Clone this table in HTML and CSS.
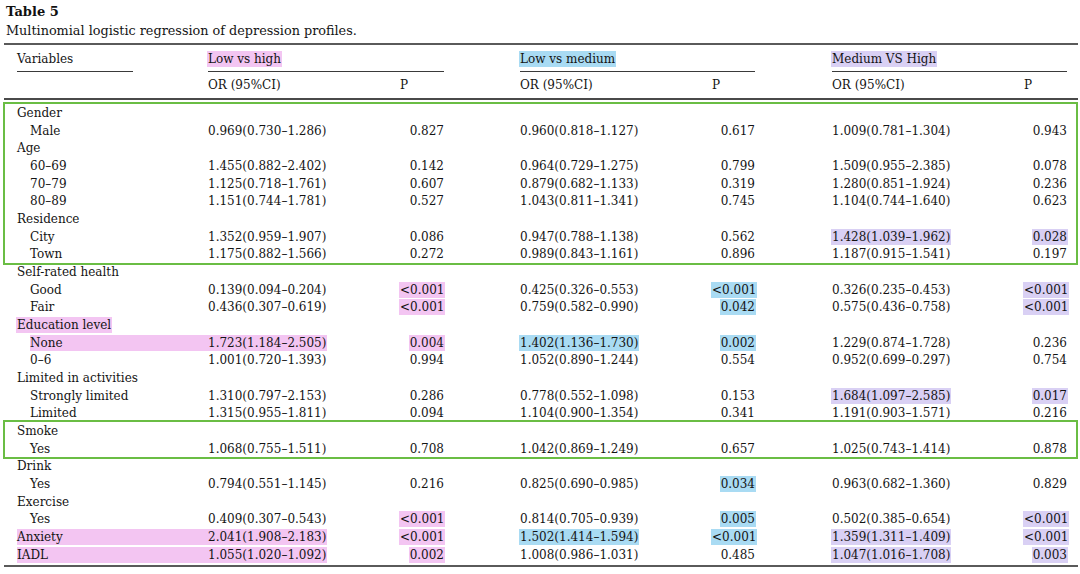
FILE: index.html
```html
<!DOCTYPE html>
<html>
<head>
<meta charset="utf-8">
<link rel="stylesheet" href="styles.css">
</head>
<body>
<div class="page">
  <h1 class="title">Table 5</h1>
  <p class="caption">Multinomial logistic regression of depression profiles.</p>
  <div class="table">
    <div class="head">
      <div class="row head1">
        <div class="hcell varcell"><span class="varline">Variables</span></div>
        <div class="hcell grp g1"><span class="hl pink">Low vs high</span></div>
        <div class="hcell grp g2"><span class="hl blue">Low vs medium</span></div>
        <div class="hcell grp g3"><span class="hl purple">Medium VS High</span></div>
      </div>
      <div class="row head2">
        <div class="cell"></div>
        <div class="cell or">OR (95%CI)</div>
        <div class="cell ph">P</div>
        <div class="cell or c2">OR (95%CI)</div>
        <div class="cell ph">P</div>
        <div class="cell or c3">OR (95%CI)</div>
        <div class="cell ph">P</div>
      </div>
    </div>
    <div class="body">
      <div class="boxed">
        <div class="row"><div class="cell lab">Gender</div></div>
        <div class="row">
          <div class="cell lab sub">Male</div>
          <div class="cell or">0.969(0.730–1.286)</div><div class="cell p">0.827</div>
          <div class="cell or c2">0.960(0.818–1.127)</div><div class="cell p">0.617</div>
          <div class="cell or c3">1.009(0.781–1.304)</div><div class="cell p">0.943</div>
        </div>
        <div class="row"><div class="cell lab">Age</div></div>
        <div class="row">
          <div class="cell lab sub">60–69</div>
          <div class="cell or">1.455(0.882–2.402)</div><div class="cell p">0.142</div>
          <div class="cell or c2">0.964(0.729–1.275)</div><div class="cell p">0.799</div>
          <div class="cell or c3">1.509(0.955–2.385)</div><div class="cell p">0.078</div>
        </div>
        <div class="row">
          <div class="cell lab sub">70–79</div>
          <div class="cell or">1.125(0.718–1.761)</div><div class="cell p">0.607</div>
          <div class="cell or c2">0.879(0.682–1.133)</div><div class="cell p">0.319</div>
          <div class="cell or c3">1.280(0.851–1.924)</div><div class="cell p">0.236</div>
        </div>
        <div class="row">
          <div class="cell lab sub">80–89</div>
          <div class="cell or">1.151(0.744–1.781)</div><div class="cell p">0.527</div>
          <div class="cell or c2">1.043(0.811–1.341)</div><div class="cell p">0.745</div>
          <div class="cell or c3">1.104(0.744–1.640)</div><div class="cell p">0.623</div>
        </div>
        <div class="row"><div class="cell lab">Residence</div></div>
        <div class="row">
          <div class="cell lab sub">City</div>
          <div class="cell or">1.352(0.959–1.907)</div><div class="cell p">0.086</div>
          <div class="cell or c2">0.947(0.788–1.138)</div><div class="cell p">0.562</div>
          <div class="cell or c3"><span class="hl purple">1.428(1.039–1.962)</span></div><div class="cell p"><span class="hl purple">0.028</span></div>
        </div>
        <div class="row">
          <div class="cell lab sub">Town</div>
          <div class="cell or">1.175(0.882–1.566)</div><div class="cell p">0.272</div>
          <div class="cell or c2">0.989(0.843–1.161)</div><div class="cell p">0.896</div>
          <div class="cell or c3">1.187(0.915–1.541)</div><div class="cell p">0.197</div>
        </div>
      </div>
      <div class="row"><div class="cell lab">Self-rated health</div></div>
      <div class="row">
        <div class="cell lab sub">Good</div>
        <div class="cell or">0.139(0.094–0.204)</div><div class="cell p"><span class="hl pink">&lt;0.001</span></div>
        <div class="cell or c2">0.425(0.326–0.553)</div><div class="cell p"><span class="hl blue">&lt;0.001</span></div>
        <div class="cell or c3">0.326(0.235–0.453)</div><div class="cell p"><span class="hl purple">&lt;0.001</span></div>
      </div>
      <div class="row">
        <div class="cell lab sub">Fair</div>
        <div class="cell or">0.436(0.307–0.619)</div><div class="cell p"><span class="hl pink">&lt;0.001</span></div>
        <div class="cell or c2">0.759(0.582–0.990)</div><div class="cell p"><span class="hl blue">0.042</span></div>
        <div class="cell or c3">0.575(0.436–0.758)</div><div class="cell p"><span class="hl purple">&lt;0.001</span></div>
      </div>
      <div class="row"><div class="cell lab"><span class="hl pink">Education level</span></div></div>
      <div class="row">
        <div class="cell lab sub band">None</div>
        <div class="cell or"><span class="hl pink joined">1.723(1.184–2.505)</span></div><div class="cell p"><span class="hl pink">0.004</span></div>
        <div class="cell or c2"><span class="hl blue">1.402(1.136–1.730)</span></div><div class="cell p"><span class="hl blue">0.002</span></div>
        <div class="cell or c3">1.229(0.874–1.728)</div><div class="cell p">0.236</div>
      </div>
      <div class="row">
        <div class="cell lab sub">0–6</div>
        <div class="cell or">1.001(0.720–1.393)</div><div class="cell p">0.994</div>
        <div class="cell or c2">1.052(0.890–1.244)</div><div class="cell p">0.554</div>
        <div class="cell or c3">0.952(0.699–0.297)</div><div class="cell p">0.754</div>
      </div>
      <div class="row"><div class="cell lab">Limited in activities</div></div>
      <div class="row">
        <div class="cell lab sub">Strongly limited</div>
        <div class="cell or">1.310(0.797–2.153)</div><div class="cell p">0.286</div>
        <div class="cell or c2">0.778(0.552–1.098)</div><div class="cell p">0.153</div>
        <div class="cell or c3"><span class="hl purple">1.684(1.097–2.585)</span></div><div class="cell p"><span class="hl purple">0.017</span></div>
      </div>
      <div class="row">
        <div class="cell lab sub">Limited</div>
        <div class="cell or">1.315(0.955–1.811)</div><div class="cell p">0.094</div>
        <div class="cell or c2">1.104(0.900–1.354)</div><div class="cell p">0.341</div>
        <div class="cell or c3">1.191(0.903–1.571)</div><div class="cell p">0.216</div>
      </div>
      <div class="boxed">
        <div class="row"><div class="cell lab">Smoke</div></div>
        <div class="row">
          <div class="cell lab sub">Yes</div>
          <div class="cell or">1.068(0.755–1.511)</div><div class="cell p">0.708</div>
          <div class="cell or c2">1.042(0.869–1.249)</div><div class="cell p">0.657</div>
          <div class="cell or c3">1.025(0.743–1.414)</div><div class="cell p">0.878</div>
        </div>
      </div>
      <div class="row"><div class="cell lab">Drink</div></div>
      <div class="row">
        <div class="cell lab sub">Yes</div>
        <div class="cell or">0.794(0.551–1.145)</div><div class="cell p">0.216</div>
        <div class="cell or c2">0.825(0.690–0.985)</div><div class="cell p"><span class="hl blue">0.034</span></div>
        <div class="cell or c3">0.963(0.682–1.360)</div><div class="cell p">0.829</div>
      </div>
      <div class="row"><div class="cell lab">Exercise</div></div>
      <div class="row">
        <div class="cell lab sub">Yes</div>
        <div class="cell or">0.409(0.307–0.543)</div><div class="cell p"><span class="hl pink">&lt;0.001</span></div>
        <div class="cell or c2">0.814(0.705–0.939)</div><div class="cell p"><span class="hl blue">0.005</span></div>
        <div class="cell or c3">0.502(0.385–0.654)</div><div class="cell p"><span class="hl purple">&lt;0.001</span></div>
      </div>
      <div class="row">
        <div class="cell lab band">Anxiety</div>
        <div class="cell or"><span class="hl pink joined">2.041(1.908–2.183)</span></div><div class="cell p"><span class="hl pink">&lt;0.001</span></div>
        <div class="cell or c2"><span class="hl blue">1.502(1.414–1.594)</span></div><div class="cell p"><span class="hl blue">&lt;0.001</span></div>
        <div class="cell or c3"><span class="hl purple">1.359(1.311–1.409)</span></div><div class="cell p"><span class="hl purple">&lt;0.001</span></div>
      </div>
      <div class="row">
        <div class="cell lab band">IADL</div>
        <div class="cell or"><span class="hl pink joined">1.055(1.020–1.092)</span></div><div class="cell p"><span class="hl pink">0.002</span></div>
        <div class="cell or c2">1.008(0.986–1.031)</div><div class="cell p">0.485</div>
        <div class="cell or c3"><span class="hl purple">1.047(1.016–1.708)</span></div><div class="cell p"><span class="hl purple">0.003</span></div>
      </div>
    </div>
  </div>
</div>
</body>
</html>
```

FILE: styles.css
```css
html, body {
  margin: 0;
  padding: 0;
  background: #ffffff;
}

body {
  font-family: "DejaVu Serif", "Liberation Serif", serif;
  color: #141414;
}

.page {
  padding: 3px 0 0 4px;
}

.title {
  margin: 0 0 0 2px;
  font-size: 13px;
  font-weight: bold;
  line-height: 18px;
  color: #111;
}

.caption {
  margin: 0 0 0 2px;
  font-size: 12.8px;
  line-height: 20px;
  color: #141414;
}

.table {
  width: 1074px;
  margin-top: 2px;
  border-top: 2px solid #5a5a5a;
  border-bottom: 2px solid #5a5a5a;
  font-size: 12px;
}

.row {
  display: grid;
  grid-template-columns: 204px 192px 44px 76px 192px 43px 77px 192px 43px 11px;
  height: 17.68px;
  align-items: center;
}

.cell {
  line-height: 16px;
  white-space: nowrap;
}

/* header */
.head {
  border-bottom: 2px solid #4a4a4a;
}

.head1 {
  height: 27px;
  align-items: stretch;
}

.hcell {
  display: flex;
  align-items: center;
  line-height: 16px;
  white-space: nowrap;
}

.varcell {
  grid-column: 1;
}

.varline {
  align-self: stretch;
  display: flex;
  align-items: center;
  margin-left: 13px;
  width: 116px;
  border-bottom: 1px solid #3a3a3a;
  padding-top: 1px;
}

.grp {
  border-bottom: 1px solid #3a3a3a;
  padding-top: 1px;
}

.g1 { grid-column: 2 / 4; }
.g2 { grid-column: 5 / 7; }
.g3 { grid-column: 8 / 10; }

.head2 {
  height: 26px;
}

.ph {
  text-align: left;
}

/* body */
.body {
  padding: 4px 0 2px;
}

.boxed {
  outline: 2px solid #6abd44;
  outline-offset: 0;
  margin-right: 2px;
  margin-left: 1px;
}

.boxed .row {
  margin-left: -1px;
}

.lab {
  grid-column: 1;
  margin-left: 13px;
}

.lab.sub {
  margin-left: 26px;
}

.or { grid-column: 2; }
.or.c2 { grid-column: 5; }
.or.c3 { grid-column: 8; }

.p {
  text-align: right;
}

/* highlights */
.hl {
  display: inline-block;
  height: 16px;
  line-height: 16px;
  padding: 0 1px;
  margin: 0 -1px;
}

.pink { background: #f3c5f2; }
.blue { background: #a9dbf3; }
.purple { background: #d9d0f4; }

.band {
  align-self: center;
  height: 16px;
  background: #f3c5f2;
}

.hl.joined {
  padding-left: 0;
  margin-left: 0;
}
```
